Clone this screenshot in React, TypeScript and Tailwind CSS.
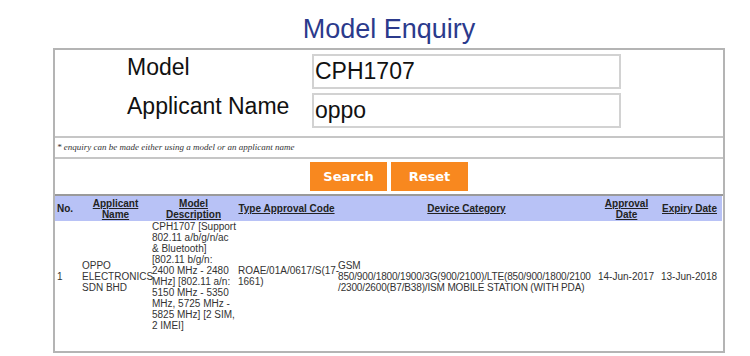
import React from "react";

const headerCell = "font-bold underline text-center align-middle px-[1px]";

export default function App() {
  return (
    <div className="w-[750px] h-[356px] bg-white font-['Liberation_Sans',Arial,sans-serif] overflow-hidden">
      <h1 className="ml-[53px] w-[672px] pt-[14px] mb-[4px] text-center text-[27px] leading-[30px] text-[#2b3a8c]">
        Model Enquiry
      </h1>
      <div className="ml-[53px] w-[672px] h-[305px] border-2 border-[#b4b4b4] flex flex-col">
        {/* form section */}
        <div className="pt-[4px] pb-[8px] pl-[72px] flex flex-col gap-[4px] border-b-2 border-[#c6c6c6]">
          <div className="flex items-start h-[35px]">
            <div className="w-[185px] text-[23px] leading-[26px] text-[#111]">Model</div>
            <div className="w-[309px] h-[35px] border-2 border-[#d2d2d2] flex items-center pl-[1px] text-[23px] text-[#111]">
              CPH1707
            </div>
          </div>
          <div className="flex items-start h-[35px]">
            <div className="w-[185px] text-[23px] leading-[26px] text-[#111]">Applicant Name</div>
            <div className="w-[309px] h-[35px] border-2 border-[#d2d2d2] flex items-center pl-[1px] text-[23px] text-[#111]">
              oppo
            </div>
          </div>
        </div>
        {/* note */}
        <div className="h-[21px] flex items-center pl-[2px] border-b-2 border-[#c6c6c6] font-['Liberation_Serif','Times_New_Roman',serif] italic text-[9px] text-[#333]">
          * enquiry can be made either using a model or an applicant name
        </div>
        {/* buttons */}
        <div className="h-[37px] flex items-center justify-center gap-[4px] border-b-2 border-[#9a9a9a]">
          <button className="w-[77px] h-[29px] bg-[#f8881f] text-white font-bold text-[13px] font-['DejaVu_Sans',Verdana,sans-serif]">
            Search
          </button>
          <button className="w-[77px] h-[29px] bg-[#f8881f] text-white font-bold text-[13px] font-['DejaVu_Sans',Verdana,sans-serif]">
            Reset
          </button>
        </div>
        {/* results */}
        <table className="w-[667px] table-fixed border-collapse text-[10px] leading-[11px] text-[#333]">
          <colgroup>
            <col className="w-[25px]" />
            <col className="w-[71px]" />
            <col className="w-[85px]" />
            <col className="w-[101px]" />
            <col className="w-[259px]" />
            <col className="w-[61px]" />
            <col className="w-[65px]" />
          </colgroup>
          <thead>
            <tr className="h-[25px] bg-[#b8c2f6] text-[#222]">
              <th className="font-bold text-left align-middle pl-[2px]">No.</th>
              <th className={headerCell}>Applicant<br />Name</th>
              <th className={headerCell}>Model<br />Description</th>
              <th className={headerCell + " whitespace-nowrap"}>Type Approval Code</th>
              <th className={headerCell}>Device Category</th>
              <th className={headerCell}>Approval<br />Date</th>
              <th className={headerCell + " whitespace-nowrap"}>Expiry Date</th>
            </tr>
          </thead>
          <tbody>
            <tr className="align-middle">
              <td className="pl-[2px] py-0">1</td>
              <td className="pl-[2px] whitespace-nowrap">OPPO<br />ELECTRONICS<br />SDN BHD</td>
              <td className="pl-[1px] whitespace-nowrap">
                CPH1707 [Support<br />
                802.11 a/b/g/n/ac<br />
                &amp; Bluetooth]<br />
                [802.11 b/g/n:<br />
                2400 MHz - 2480<br />
                MHz] [802.11 a/n:<br />
                5150 MHz - 5350<br />
                MHz, 5725 MHz -<br />
                5825 MHz] [2 SIM,<br />
                2 IMEI]
              </td>
              <td className="pl-[2px] whitespace-nowrap">ROAE/01A/0617/S(17-<br />1661)</td>
              <td className="pl-[1px] whitespace-nowrap tracking-[-0.15px]">
                GSM<br />
                850/900/1800/1900/3G(900/2100)/LTE(850/900/1800/2100<br />
                /2300/2600(B7/B38)/ISM MOBILE STATION (WITH PDA)
              </td>
              <td className="pl-[2px] whitespace-nowrap">14-Jun-2017</td>
              <td className="pl-[4px] whitespace-nowrap">13-Jun-2018</td>
            </tr>
          </tbody>
        </table>
      </div>
    </div>
  );
}
